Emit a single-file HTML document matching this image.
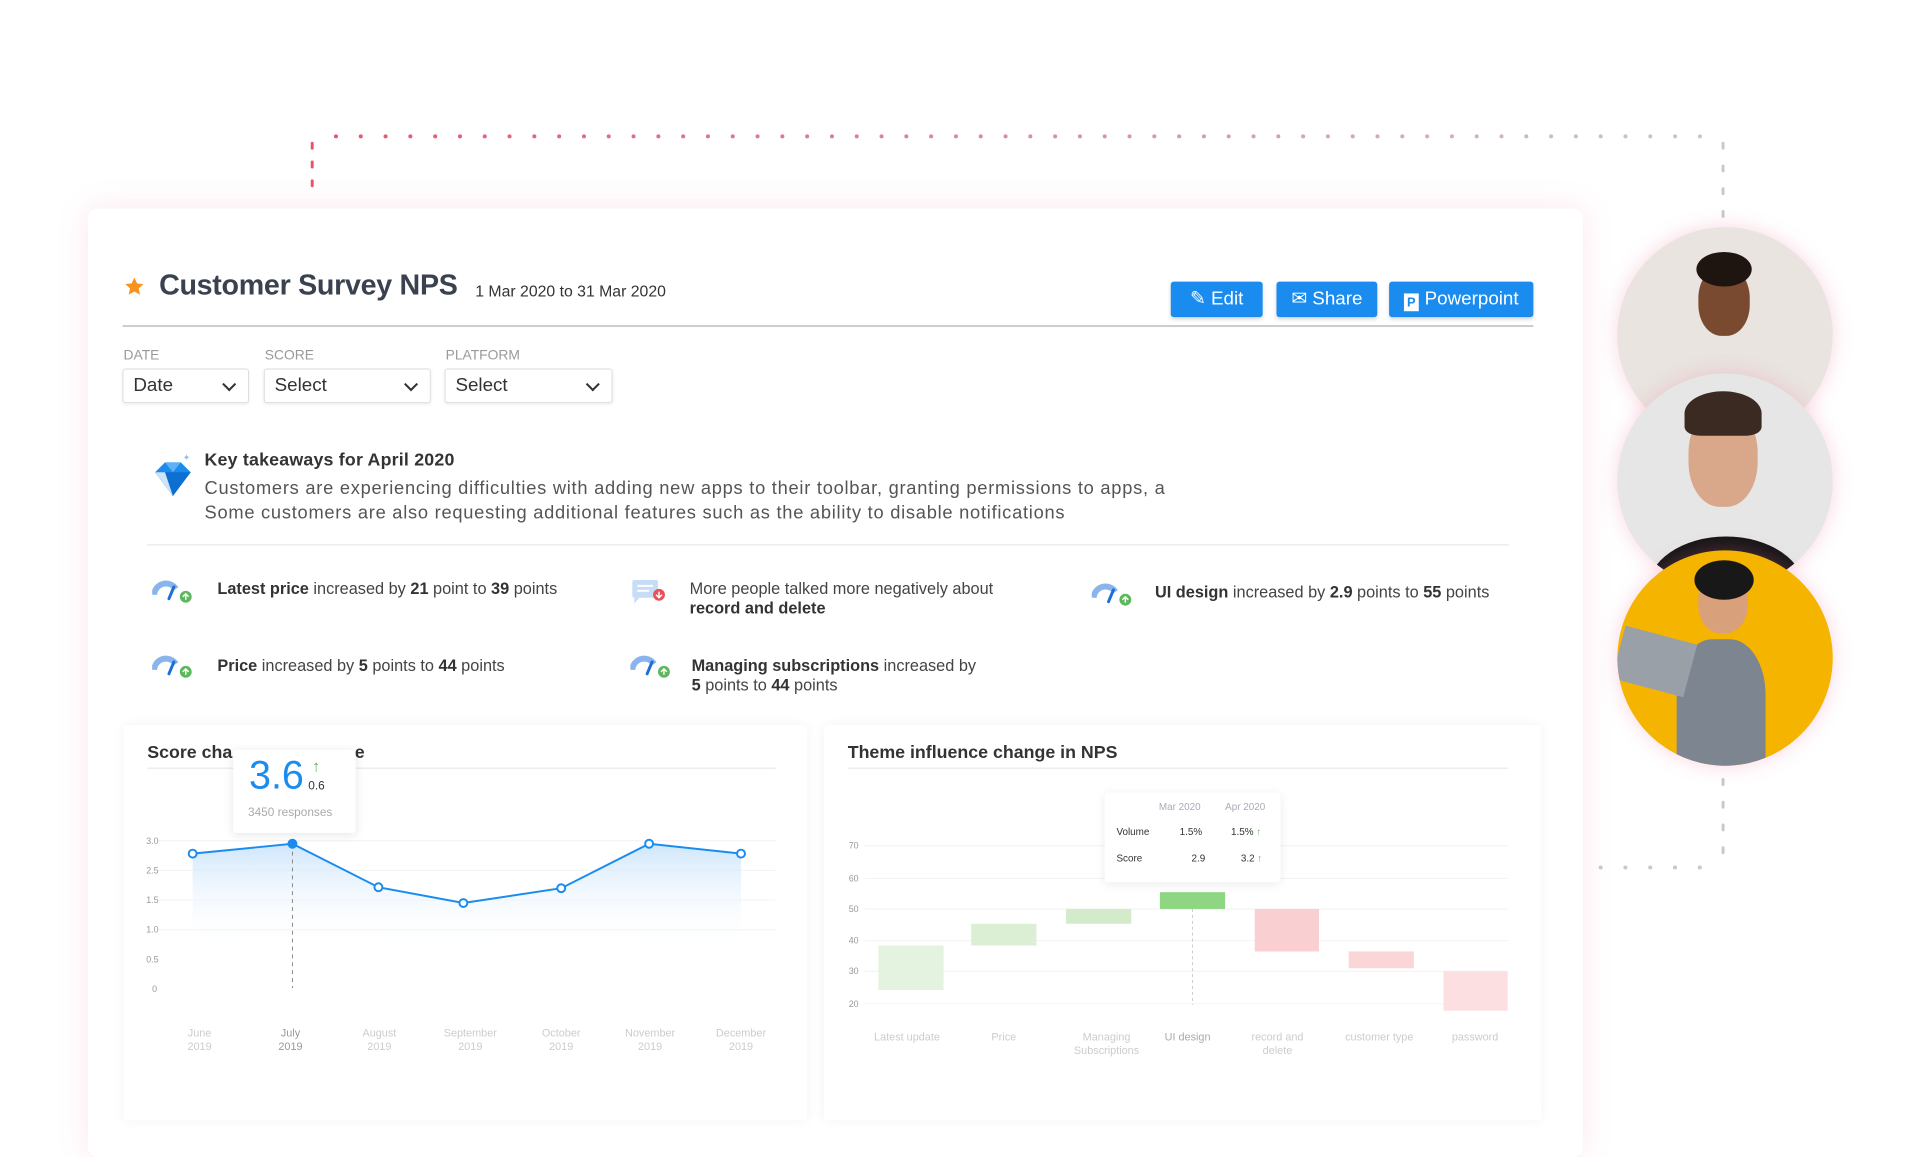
<!DOCTYPE html>
<html><head><meta charset="utf-8"><style>
*{margin:0;padding:0;box-sizing:border-box}
body{width:1921px;height:1081px;background:#fff;position:relative;overflow:hidden;font-family:"Liberation Sans",sans-serif;color:#333}
#w{position:absolute;left:0;top:0;width:1950px;height:1100px;transform:scale(0.988);transform-origin:0 0}
.a{position:absolute}
.card{left:89px;top:211px;width:1513px;height:960px;background:#fff;border-radius:10px;box-shadow:0 0 30px rgba(240,120,160,.18)}
.btn{position:absolute;top:285px;height:36px;background:#1a8cf0;color:#fff;border-radius:3px;font-size:19px;line-height:36px;text-align:center;box-shadow:0 2px 4px rgba(0,0,0,.15)}
.lbl{position:absolute;top:351px;font-size:14px;color:#999}
.sel{position:absolute;top:373px;height:35px;border:1px solid #ddd;border-radius:3px;font-size:19px;line-height:33px;padding-left:10px;color:#333;box-shadow:0 1px 3px rgba(0,0,0,.08)}
.sel:after{content:"";position:absolute;right:14px;top:10px;width:8px;height:8px;border-right:2px solid #333;border-bottom:2px solid #333;transform:rotate(45deg)}
.it{position:absolute;font-size:16.5px;color:#444;line-height:20px}
.it b{color:#333}
.ax{position:absolute;font-size:9px;color:#999}
.xl{position:absolute;font-size:11px;color:#ccc;text-align:center;width:80px;line-height:14px}
.ph{position:absolute;border-radius:50%;overflow:hidden}
</style></head><body><div id="w">
<svg class="a" style="left:0;top:0" width="1921" height="1081">
<defs><linearGradient id="dl" gradientUnits="userSpaceOnUse" x1="316" y1="0" x2="1744" y2="0"><stop offset="0" stop-color="#e8546f"/><stop offset="1" stop-color="#c8c8d0"/></linearGradient>
<linearGradient id="fa" x1="0" y1="0" x2="0" y2="1"><stop offset="0" stop-color="#cfe6fb"/><stop offset="1" stop-color="#fff" stop-opacity="0"/></linearGradient></defs>
<line x1="340" y1="138" x2="1744" y2="138" stroke="url(#dl)" stroke-width="4" stroke-dasharray="0.1 25" stroke-linecap="round"/>
<line x1="316" y1="145" x2="316" y2="198" stroke="#e8546f" stroke-width="3" stroke-dasharray="5 14" stroke-linecap="round"/>
<line x1="1744" y1="145" x2="1744" y2="875" stroke="#c8c8d0" stroke-width="3" stroke-dasharray="5 18" stroke-linecap="round"/>
<line x1="1620" y1="878" x2="1740" y2="878" stroke="#c8c8d0" stroke-width="4" stroke-dasharray="0.1 25" stroke-linecap="round"/>
</svg>
<div class="a card"></div>
<svg class="a" style="left:125px;top:279px" width="22" height="22" viewBox="0 0 24 24"><path d="M12 2l3 6.5 7 .8-5.2 4.8 1.5 7L12 17.5 5.7 21l1.5-7L2 9.3l7-.8z" fill="#f7931e"/></svg>
<div class="a" style="left:161px;top:273px;font-size:29px;font-weight:bold;color:#3a4250;letter-spacing:-0.3px">Customer Survey NPS</div>
<div class="a" style="left:481px;top:287px;font-size:16px;color:#333">1 Mar 2020 to 31 Mar 2020</div>
<div class="btn" style="left:1185px;width:93px">✎ Edit</div>
<div class="btn" style="left:1292px;width:102px">✉ Share</div>
<div class="btn" style="left:1406px;width:146px"><span style="display:inline-block;background:#fff;color:#1a8cf0;font-size:13px;font-weight:bold;width:15px;height:18px;line-height:18px;vertical-align:-2px;margin-right:6px">P</span>Powerpoint</div>
<div class="a" style="left:124px;top:329px;width:1428px;height:2px;background:#ccc"></div>
<div class="lbl" style="left:125px">DATE</div><div class="lbl" style="left:268px">SCORE</div><div class="lbl" style="left:451px">PLATFORM</div>
<div class="sel" style="left:124px;width:128px">Date</div>
<div class="sel" style="left:267px;width:169px">Select</div>
<div class="sel" style="left:450px;width:170px">Select</div>
<svg class="a" style="left:153px;top:458px" width="44" height="46" viewBox="0 0 44 46"><path d="M4 20l10-10h16l10 10-18 24z" fill="#1a8cf0"/><path d="M4 20h36L22 44z" fill="#0f6fd0"/><path d="M14 10l8 10 8-10" fill="#5fb0f5"/><path d="M4 20l18 24-8-24z" fill="#cfe3fa"/><text x="32" y="8" font-size="9" fill="#8cc0f5">✦</text></svg>
<div class="a" style="left:207px;top:455px;font-size:18px;font-weight:bold;color:#333;letter-spacing:.2px">Key takeaways for April 2020</div>
<div class="a" style="left:207px;top:481px;font-size:18.5px;color:#555;line-height:25px;letter-spacing:.75px">Customers are experiencing difficulties with adding new apps to their toolbar, granting permissions to apps, a<br>Some customers are also requesting additional features such as the ability to disable notifications</div>
<div class="a" style="left:149px;top:551px;width:1378px;height:1px;background:#e3e3e3"></div>
<svg width="0" height="0" style="position:absolute"><defs><g id="g"><path d="M2 16a12 12 0 0 1 22-6" stroke="#8ab4ec" stroke-width="6" fill="none"/><line x1="17" y1="20" x2="22" y2="8" stroke="#1a6fd8" stroke-width="3" stroke-linecap="round"/><circle cx="34" cy="18" r="6" fill="#5cb85c"/><path d="M34 21v-6m-3 3l3-3 3 3" stroke="#fff" stroke-width="1.5" fill="none"/></g></defs></svg>
<svg class="a" style="left:154px;top:586px" width="42" height="26"><use href="#g"/></svg>
<svg class="a" style="left:154px;top:662px" width="42" height="26"><use href="#g"/></svg>
<svg class="a" style="left:638px;top:662px" width="42" height="26"><use href="#g"/></svg>
<svg class="a" style="left:1105px;top:589px" width="42" height="26"><use href="#g"/></svg>
<svg class="a" style="left:638px;top:585px" width="42" height="30"><rect x="2" y="2" width="26" height="18" rx="2" fill="#c6dcf7"/><path d="M4 20v6l5-6z" fill="#c6dcf7"/><path d="M7 8h16M7 13h12" stroke="#fff" stroke-width="2"/><circle cx="29" cy="17" r="6" fill="#e8505b"/><path d="M29 14v6m-3-3l3 3 3-3" stroke="#fff" stroke-width="1.5" fill="none"/></svg>
<div class="it" style="left:220px;top:586px"><b>Latest price</b> increased by <b>21</b> point to <b>39</b> points</div>
<div class="it" style="left:698px;top:586px">More people talked more negatively about<br><b>record and delete</b></div>
<div class="it" style="left:1169px;top:590px"><b>UI design</b> increased by <b>2.9</b> points to <b>55</b> points</div>
<div class="it" style="left:220px;top:664px"><b>Price</b> increased by <b>5</b> points to <b>44</b> points</div>
<div class="it" style="left:700px;top:664px"><b>Managing subscriptions</b> increased by<br><b>5</b> points to <b>44</b> points</div>
<div class="a" style="left:125px;top:734px;width:692px;height:400px;background:#fff;box-shadow:0 0 12px rgba(0,0,0,.05);border-radius:4px"></div>
<div class="a" style="left:834px;top:734px;width:726px;height:400px;background:#fff;box-shadow:0 0 12px rgba(0,0,0,.05);border-radius:4px"></div>
<div class="a" style="left:149px;top:751px;font-size:18px;font-weight:bold;color:#333">Score cha</div>
<div class="a" style="left:359px;top:751px;font-size:18px;font-weight:bold;color:#333">e</div>
<div class="a" style="left:149px;top:777px;width:636px;height:1px;background:#e3e3e3"></div>
<div class="a" style="left:858px;top:751px;font-size:18px;font-weight:bold;color:#333">Theme influence change in NPS</div>
<div class="a" style="left:858px;top:777px;width:668px;height:1px;background:#e3e3e3"></div>
<svg class="a" style="left:0;top:0" width="1921" height="1081">
<g stroke="#f2f2f2"><line x1="160" y1="851" x2="785" y2="851"/><line x1="160" y1="881" x2="785" y2="881"/><line x1="160" y1="911" x2="785" y2="911"/><line x1="160" y1="941" x2="785" y2="941"/>
<line x1="875" y1="856" x2="1526" y2="856"/><line x1="875" y1="889" x2="1526" y2="889"/><line x1="875" y1="920" x2="1526" y2="920"/><line x1="875" y1="952" x2="1526" y2="952"/><line x1="875" y1="983" x2="1526" y2="983"/><line x1="875" y1="1016" x2="1526" y2="1016"/></g>
<path d="M195 864L296 854L383 898L469 914L568 899L657 854L750 864V960H195Z" fill="url(#fa)"/>
<line x1="296" y1="854" x2="296" y2="1000" stroke="#888" stroke-dasharray="4 4"/>
<polyline points="195,864 296,854 383,898 469,914 568,899 657,854 750,864" fill="none" stroke="#1a8cf0" stroke-width="2"/>
<g fill="#fff" stroke="#1a8cf0" stroke-width="2"><circle cx="195" cy="864" r="4"/><circle cx="383" cy="898" r="4"/><circle cx="469" cy="914" r="4"/><circle cx="568" cy="899" r="4"/><circle cx="657" cy="854" r="4"/><circle cx="750" cy="864" r="4"/></g>
<circle cx="296" cy="854" r="5" fill="#1a8cf0"/>
<rect x="889" y="957" width="66" height="45" fill="#e4f3df"/><rect x="983" y="935" width="66" height="22" fill="#dbefd4"/><rect x="1079" y="920" width="66" height="15" fill="#d3ebca"/><rect x="1174" y="903" width="66" height="17" fill="#8fd682"/>
<rect x="1270" y="920" width="65" height="43" fill="#f9cfd2"/><rect x="1365" y="963" width="66" height="17" fill="#fad6d9"/><rect x="1461" y="983" width="65" height="40" fill="#fbdfe1"/>
<line x1="1207" y1="920" x2="1207" y2="1017" stroke="#ccc" stroke-dasharray="3 3"/>
</svg>
<div class="a" style="left:236px;top:759px;width:124px;height:84px;background:#fff;box-shadow:0 2px 10px rgba(0,0,0,.1);border-radius:3px"></div>
<div class="a" style="left:252px;top:763px;font-size:40px;color:#1a8cf0">3.6</div>
<div class="a" style="left:316px;top:768px;font-size:16px;color:#5cb85c;font-weight:bold">↑</div>
<div class="a" style="left:312px;top:788px;font-size:12px;color:#333">0.6</div>
<div class="a" style="left:251px;top:815px;font-size:12px;color:#aaa">3450 responses</div>
<div class="a" style="left:1118px;top:802px;width:178px;height:91px;background:#fff;box-shadow:0 2px 10px rgba(0,0,0,.08);border-radius:3px;font-size:10px">
<div class="a" style="left:55px;top:10px;color:#aab">Mar 2020</div><div class="a" style="left:122px;top:10px;color:#aab">Apr 2020</div>
<div class="a" style="left:12px;top:35px">Volume</div><div class="a" style="left:76px;top:35px">1.5%</div><div class="a" style="left:128px;top:35px">1.5% <span style="color:#5cb85c">↑</span></div>
<div class="a" style="left:12px;top:62px">Score</div><div class="a" style="left:88px;top:62px">2.9</div><div class="a" style="left:138px;top:62px">3.2 <span style="color:#5cb85c">↑</span></div></div>
<div class="ax" style="left:148px;top:846px">3.0</div><div class="ax" style="left:148px;top:876px">2.5</div><div class="ax" style="left:148px;top:906px">1.5</div><div class="ax" style="left:148px;top:936px">1.0</div><div class="ax" style="left:148px;top:966px">0.5</div><div class="ax" style="left:154px;top:996px">0</div>
<div class="ax" style="left:859px;top:851px">70</div><div class="ax" style="left:859px;top:884px">60</div><div class="ax" style="left:859px;top:915px">50</div><div class="ax" style="left:859px;top:947px">40</div><div class="ax" style="left:859px;top:978px">30</div><div class="ax" style="left:859px;top:1011px">20</div>
<div class="xl" style="left:162px;top:1039px">June<br>2019</div><div class="xl" style="left:254px;top:1039px;color:#999">July<br>2019</div><div class="xl" style="left:344px;top:1039px">August<br>2019</div><div class="xl" style="left:436px;top:1039px">September<br>2019</div><div class="xl" style="left:528px;top:1039px">October<br>2019</div><div class="xl" style="left:618px;top:1039px">November<br>2019</div><div class="xl" style="left:710px;top:1039px">December<br>2019</div>
<div class="xl" style="left:878px;top:1043px">Latest update</div><div class="xl" style="left:976px;top:1043px">Price</div><div class="xl" style="left:1080px;top:1043px">Managing<br>Subscriptions</div><div class="xl" style="left:1162px;top:1043px;color:#aaa">UI design</div><div class="xl" style="left:1253px;top:1043px">record and<br>delete</div><div class="xl" style="left:1356px;top:1043px">customer type</div><div class="xl" style="left:1453px;top:1043px">password</div>
<div class="ph" style="left:1637px;top:230px;width:218px;height:218px;background:#e9e4df;box-shadow:0 0 20px rgba(240,120,160,.3)">
<div class="a" style="left:44px;top:150px;width:130px;height:120px;background:#f2c94c;border-radius:50% 50% 0 0"></div><div class="a" style="left:90px;top:150px;width:38px;height:70px;background:#c8d8ec"></div><div class="a" style="left:82px;top:40px;width:52px;height:70px;background:#7a4a30;border-radius:45%"></div><div class="a" style="left:80px;top:25px;width:56px;height:35px;background:#1e1410;border-radius:50%"></div></div>
<div class="ph" style="left:1637px;top:378px;width:218px;height:218px;background:#e6e6e6;box-shadow:0 0 20px rgba(240,120,160,.3)">
<div class="a" style="left:30px;top:165px;width:160px;height:110px;background:#151515;border-radius:50% 50% 0 0"></div><div class="a" style="left:72px;top:35px;width:70px;height:100px;background:#d9a88a;border-radius:45%"></div><div class="a" style="left:68px;top:18px;width:78px;height:45px;background:#3a2a22;border-radius:50% 50% 20% 20%"></div></div>
<div class="ph" style="left:1637px;top:557px;width:218px;height:218px;background:#f5b400;box-shadow:0 0 20px rgba(240,120,160,.3)">
<div class="a" style="left:60px;top:90px;width:90px;height:140px;background:#7d8590;border-radius:40% 40% 0 0"></div><div class="a" style="left:0;top:85px;width:75px;height:55px;background:#9aa0a8;transform:rotate(15deg)"></div><div class="a" style="left:82px;top:22px;width:50px;height:62px;background:#d9a07c;border-radius:45%"></div><div class="a" style="left:78px;top:10px;width:60px;height:40px;background:#181818;border-radius:50%"></div></div>
</div></body></html>
